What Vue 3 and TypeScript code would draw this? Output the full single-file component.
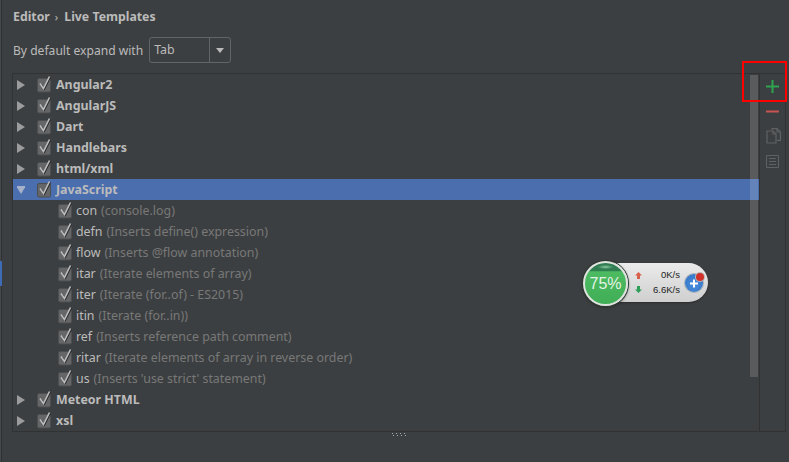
<script setup lang="ts">
interface Row { name: string; desc?: string; kind: 'group' | 'open' | 'item' }
const rows: Row[] = [
  { name: 'Angular2', kind: 'group' },
  { name: 'AngularJS', kind: 'group' },
  { name: 'Dart', kind: 'group' },
  { name: 'Handlebars', kind: 'group' },
  { name: 'html/xml', kind: 'group' },
  { name: 'JavaScript', kind: 'open' },
  { name: 'con', desc: '(console.log)', kind: 'item' },
  { name: 'defn', desc: '(Inserts define() expression)', kind: 'item' },
  { name: 'flow', desc: '(Inserts @flow annotation)', kind: 'item' },
  { name: 'itar', desc: '(Iterate elements of array)', kind: 'item' },
  { name: 'iter', desc: '(Iterate (for..of) - ES2015)', kind: 'item' },
  { name: 'itin', desc: '(Iterate (for..in))', kind: 'item' },
  { name: 'ref', desc: '(Inserts reference path comment)', kind: 'item' },
  { name: 'ritar', desc: '(Iterate elements of array in reverse order)', kind: 'item' },
  { name: 'us', desc: "(Inserts 'use strict' statement)", kind: 'item' },
  { name: 'Meteor HTML', kind: 'group' },
  { name: 'xsl', kind: 'group' },
]
</script>

<template>
  <div class="page">
    <div class="rail"><div class="rail-mark"></div></div>
    <div class="content">
      <div class="crumb"><b>Editor</b><span class="sep">›</span><b>Live Templates</b></div>
      <div class="expand">
        <span>By default expand with</span>
        <div class="combo">
          <span class="combo-value">Tab</span>
          <span class="combo-arrow"><svg width="8" height="5" viewBox="0 0 8 5"><path d="M0 0h8L4 5z" fill="#bbb" /></svg></span>
        </div>
      </div>
      <div class="table">
        <div class="tree">
          <div v-for="r in rows" :key="r.name" class="row" :class="[r.kind]">
            <svg v-if="r.kind === 'group'" class="arrow" width="8" height="10" viewBox="0 0 8 10"><path d="M0 0l8 5-8 5z" fill="#9a9c9e" /></svg>
            <svg v-else-if="r.kind === 'open'" class="arrow" width="8" height="10" viewBox="0 0 8 10"><path d="M-1 1h10L4 9z" fill="#a5b1c9" /></svg>
            <svg class="check" width="15" height="21" viewBox="0 0 15 21">
              <rect x=".5" y="4.500" width="13" height="13.500" rx="1.500" fill="#646668" stroke="#4c4e50" />
              <path d="M3 9.500l3.500 5L12.500 2.500" fill="none" stroke="#2a2a2a" stroke-width="1.400" transform="translate(.9 .7)" />
              <path d="M3 9.500l3.500 5L12.500 2.500" fill="none" stroke="#bdbdbd" stroke-width="1.600" />
            </svg>
            <span class="name">{{ r.name }}</span>
            <span v-if="r.desc" class="desc">{{ r.desc }}</span>
          </div>
        </div>
        <div class="thumb"></div>
        <div class="tools">
          <svg class="t-add" width="13" height="13" viewBox="0 0 13 13"><path d="M0 6.500h13M6.500 0v13" stroke="#2ea44f" stroke-width="2" /></svg>
          <svg class="t-del" width="13" height="13" viewBox="0 0 13 13"><path d="M0 6.500h13" stroke="#c75450" stroke-width="2" /></svg>
          <svg class="t-copy" width="15" height="16" viewBox="0 0 15 16"><g fill="none" stroke="#5f6163" stroke-width="1.200"><path d="M6 2V.6h5l3.400 3.400v8.400H11" /><path d="M11 .6V4h3.400" /><path d="M1 3h6l3 3v9H1z" /><path d="M7 3v3h3" /></g></svg>
          <svg class="t-list" width="13" height="13" viewBox="0 0 13 13"><path d="M.5.500h12v12H.5zM3 3.500h7M3 6.500h7M3 9.500h7" fill="none" stroke="#5f6163" /></svg>
        </div>
      </div>
      <svg class="grip" width="15" height="3" viewBox="0 0 15 3"><path d="M1 .5h14" stroke="#a8a8a8" stroke-dasharray="1 3" /><path d="M0 2.500h15" stroke="#a8a8a8" stroke-dasharray="1 3" stroke-dashoffset="2" /></svg>
    </div>
    <div class="redbox"></div>
    <div class="widget">
      <div class="pill">
        <div class="arrows">
          <svg width="7" height="7" viewBox="0 0 7 7"><path d="M3.500 0L7 3.500H5V7H2V3.500H0z" fill="#d9604a" /></svg>
          <svg width="7" height="7" viewBox="0 0 7 7"><path d="M3.500 7L7 3.500H5V0H2v3.500H0z" fill="#2f9e5a" /></svg>
        </div>
        <div class="speeds"><span>0K/s</span><span>6.6K/s</span></div>
        <div class="plus">
          <svg width="18" height="18" viewBox="0 0 18 18"><path d="M5 9.500h8M9 5.500v8" stroke="#fff" stroke-width="2" /></svg>
          <i class="dot"></i>
        </div>
      </div>
      <div class="ball"><span>75%</span></div>
    </div>
  </div>
</template>

<style>
html, body { margin: 0; background: #3c3f41; }
</style>

<style scoped>
.page {
  position: relative;
  display: flex;
  width: 789px;
  height: 462px;
  overflow: hidden;
  background: #3c3f41;
  color: #bbbbbb;
  font: 12.4px "Noto Sans", "Open Sans", sans-serif;
}
.rail { width: 2px; flex: none; box-sizing: border-box; background: #45484a; border-right: 1px solid #2f3133; }
.rail-mark { width: 2px; height: 25px; margin-top: 261px; background: #3d6bb5; }
.content { flex: 1; min-width: 0; padding: 7px 3px 0 10px; }
.crumb { height: 20px; line-height: 20px; display: flex; align-items: center; font-size: 12.3px; margin-left: 1px; }
.crumb b { font-weight: 700; }
.sep { margin: 0 6px 0 5px; font-size: 11px; }
.expand { display: flex; align-items: center; gap: 6px; margin-top: 10px; height: 26px; margin-left: 1px; font-size: 12.1px; }
.combo { display: flex; width: 82px; height: 26px; box-sizing: border-box; border: 1px solid #646464; border-radius: 3px; }
.combo-value { flex: 1; padding-left: 4px; line-height: 23px; font-size: 12.4px; }
.combo-arrow { width: 20px; border-left: 1px solid #646464; display: flex; align-items: center; justify-content: center; }
.table {
  position: relative;
  display: flex;
  height: 359px;
  margin-top: 10px;
  box-sizing: border-box;
  border: 1px solid #323232;
}
.tree { flex: 1; min-width: 0; }
.row { height: 21px; display: flex; align-items: center; white-space: nowrap; }
.arrow { margin-left: 4px; flex: none; }
.check { margin-left: 12px; flex: none; }
.name { margin-left: 4px; }
.group .name, .open .name { font-weight: 700; }
.open { background: #4b6eaf; }
.item { padding-left: 45px; }
.item .check { margin-left: 0; }
.item .name { margin-left: 3px; }
.desc { margin-left: 4px; color: #787878; }
.thumb {
  position: absolute;
  left: 737px;
  top: 1px;
  width: 8px;
  height: 302px;
  background: rgba(255, 255, 255, 0.15);
}
.tools {
  width: 26px;
  flex: none;
  border-left: 1px solid #323232;
  box-sizing: border-box;
  display: flex;
  flex-direction: column;
  align-items: center;
  padding-top: 6px;
}
.t-del { margin-top: 12px; }
.t-copy { margin-top: 10px; margin-left: 1px; }
.t-list { margin-top: 11px; }
.grip { display: block; margin: 1px 0 0 379px; }
.redbox { position: absolute; left: 742px; top: 61px; width: 45px; height: 41px; box-sizing: border-box; border: 2px solid #ff0000; }
.widget { position: absolute; left: 583px; top: 261px; width: 126px; height: 45px; }
.pill {
  position: absolute;
  left: 20px;
  top: 2px;
  width: 105px;
  height: 39px;
  box-sizing: border-box;
  border-radius: 0 20px 20px 0;
  background: linear-gradient(#ebebeb, #cfcfcf);
  display: flex;
  align-items: center;
  padding-left: 32px;
  box-shadow: 0 1px 2px #2a2a2a;
  color: #222;
}
.arrows { display: flex; flex-direction: column; gap: 7px; width: 7px; flex: none; }
.arrows svg { display: block; }
.speeds {
  display: flex;
  flex-direction: column;
  align-items: flex-end;
  width: 38px;
  flex: none;
  gap: 3px;
  font: 9.500px/12px "Liberation Sans", sans-serif;
}
.plus {
  position: relative;
  width: 18px;
  height: 18px;
  flex: none;
  margin-left: 5px;
  border-radius: 50%;
  background: radial-gradient(circle at 50% 60%, #4b8fe0, #2f6fbe);
  box-shadow: 0 0 0 1px #a9b0b8;
}
.plus svg { display: block; }
.dot {
  position: absolute;
  right: -1px;
  top: -1px;
  width: 8px;
  height: 8px;
  border-radius: 50%;
  background: #d1302b;
  box-shadow: 0 0 0 1px #b9b9b9;
}
.ball {
  position: absolute;
  left: 0;
  top: 0;
  width: 45px;
  height: 45px;
  box-sizing: border-box;
  border: 2px solid #dfe3df;
  border-radius: 50%;
  background:
    radial-gradient(ellipse 8px 2px at 50% 4px, #8fc9a2, transparent),
    linear-gradient(#2f7f52 0, #2f7f52 20%, #4dbb61 21%, #3fae56 100%);
  box-shadow: 0 0 0 1px #2b3b30, 0 1px 3px #222;
  display: flex;
  align-items: center;
  justify-content: center;
  color: #e4f3e6;
  font: 16px/1 "Liberation Sans", sans-serif;
  padding-top: 1px;
}
</style>
